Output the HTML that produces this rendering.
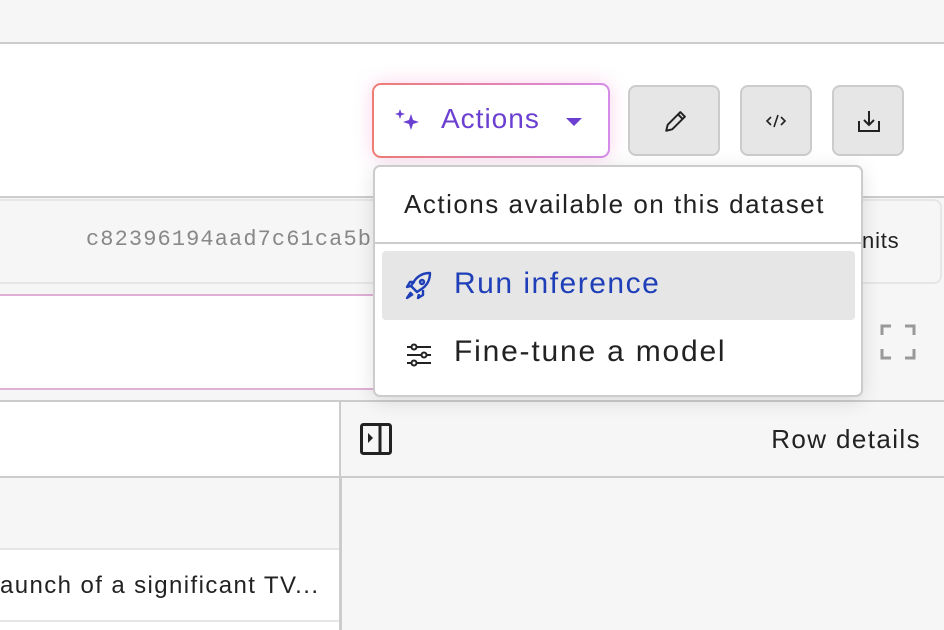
<!DOCTYPE html>
<html><head><style>
*{box-sizing:border-box;margin:0;padding:0}
body{width:944px;height:630px;overflow:hidden;position:relative;background:#fff;font-family:"Liberation Sans",sans-serif;color:#222}
.abs{position:absolute;white-space:nowrap}
</style></head><body>
<div class="abs" style="left:0;top:0;width:944px;height:44px;background:#f6f6f6;border-bottom:2px solid #ccc"></div>
<div class="abs" style="left:372px;top:83px;width:238px;height:75px;border-radius:9px;padding:2px;background:linear-gradient(90deg,#ee7d74,#d58be8);box-shadow:0 0 18px rgba(240,130,200,0.35)">
 <div style="width:100%;height:100%;background:#fff;border-radius:7px;position:relative">
  <svg class="abs" style="left:20px;top:22px" width="28" height="26" viewBox="0 0 28 26"><path d="M6 2l1.3 3.7L11 7 7.3 8.3 6 12 4.7 8.3 1 7l3.7-1.3z" fill="#6b3fd0"/><path d="M17 7l2 6 6 2-6 2-2 6-2-6-6-2 6-2z" fill="#6b3fd0"/></svg>
  <div class="abs" style="left:67px;top:18px;font-size:28px;letter-spacing:1px;color:#6b3fd0">Actions</div>
  <div class="abs" style="left:192px;top:33px;width:0;height:0;border-left:8px solid transparent;border-right:8px solid transparent;border-top:8px solid #6b3fd0"></div>
 </div>
</div>
<div class="abs" style="left:628px;top:85px;width:92px;height:71px;background:#e6e6e6;border:2px solid #ccc;border-radius:8px"><svg class="abs" style="left:33px;top:21px" width="26" height="26" viewBox="0 0 24 24" fill="none" stroke="#222" stroke-width="1.8" stroke-linejoin="round"><path d="M3 21l1.3-5.5L16 3.8l4.2 4.2L8.5 19.7z M14 6l4 4"/></svg></div>
<div class="abs" style="left:740px;top:85px;width:72px;height:71px;background:#e6e6e6;border:2px solid #ccc;border-radius:8px"><svg class="abs" style="left:22px;top:22px" width="24" height="24" viewBox="0 0 24 24" fill="none" stroke="#222" stroke-width="1.6"><path d="M7 8l-4 4 4 4M17 8l4 4-4 4M14 6l-4 12"/></svg></div>
<div class="abs" style="left:832px;top:85px;width:72px;height:71px;background:#e6e6e6;border:2px solid #ccc;border-radius:8px"><svg class="abs" style="left:21px;top:20px" width="28" height="28" viewBox="0 0 28 28" fill="none" stroke="#222" stroke-width="2"><path d="M4 14v10h20V14M14 4v14M9 13l5 5 5-5"/></svg></div>
<div class="abs" style="left:0;top:196px;width:944px;height:205px;background:#f6f6f6;border-top:2px solid #ccc"></div>
<div class="abs" style="left:-10px;top:199px;width:952px;height:85px;background:#f6f6f6;border:2px solid #e6e6e6;border-radius:8px"></div>
<div class="abs" style="left:86px;top:227px;font-family:'Liberation Mono',monospace;font-size:22px;letter-spacing:1.1px;color:#888">c82396194aad7c61ca5b</div>
<div class="abs" style="left:849px;top:228px;font-size:22px;letter-spacing:0.8px;color:#222">units</div>
<div class="abs" style="left:-2px;top:294px;width:400px;height:96px;background:#fff;border-top:2px solid #e0b0d8;border-bottom:2px solid #e0b0d8"></div>
<svg class="abs" style="left:880px;top:324px" width="36" height="36" viewBox="0 0 36 36" fill="none" stroke="#999" stroke-width="3"><path d="M2 11V2h9M25 2h9v9M34 25v9h-9M11 34H2v-9"/></svg>
<div class="abs" style="left:0;top:400px;width:944px;height:78px;background:#fff;border-top:2px solid #ccc;border-bottom:2px solid #ccc"></div>
<div class="abs" style="left:339px;top:400px;width:605px;height:78px;background:#f6f6f6;border:2px solid #ccc;border-right:none"></div>
<svg class="abs" style="left:360px;top:423px" width="32" height="33" viewBox="0 0 32 33" fill="none" stroke="#222" stroke-width="3"><rect x="1.5" y="1.5" width="29" height="29" rx="2"/><path d="M20 2v28"/><path d="M8 10l5 5-5 5z" fill="#222" stroke="none"/></svg>
<div class="abs" style="right:23px;top:424px;font-size:26px;letter-spacing:1.4px;color:#222">Row details</div>
<div class="abs" style="left:0;top:478px;width:340px;height:72px;background:#f6f6f6;border-bottom:2px solid #e6e6e6"></div>
<div class="abs" style="left:0;top:550px;width:340px;height:72px;background:#fff;border-bottom:2px solid #e6e6e6"></div>
<div class="abs" style="left:0;top:572px;font-size:24px;letter-spacing:1.4px;color:#222">aunch of a significant TV...</div>
<div class="abs" style="left:339px;top:478px;width:605px;height:152px;background:#f6f6f6;border-left:3px solid #ccc"></div>
<div class="abs" style="left:373px;top:165px;width:490px;height:232px;background:#fff;border:2px solid #ccc;border-radius:7px;box-shadow:0 4px 20px rgba(0,0,0,0.12)">
 <div class="abs" style="left:29px;top:22px;font-size:26px;letter-spacing:1.5px;color:#222">Actions available on this dataset</div>
 <div class="abs" style="left:0;top:75px;width:486px;height:2px;background:#ccc"></div>
 <div class="abs" style="left:7px;top:84px;width:473px;height:69px;background:#e6e6e6;border-radius:4px"></div>
 <svg class="abs" style="left:29px;top:104px" width="30" height="30" viewBox="0 0 30 30" fill="none" stroke="#1e3fb8" stroke-width="2.4" stroke-linejoin="round"><path d="M11 19l-4-4 4-6c4-5 9-7 15-7 0 6-2 11-7 15l-6 4z"/><circle cx="18" cy="11" r="2"/><path d="M7 15l-4 1 3-5h5M15 23l-1 4 5-3v-5"/><path d="M7 21l-4 6 6-4" fill="#1e3fb8"/></svg>
 <div class="abs" style="left:79px;top:100px;font-size:30px;letter-spacing:1.5px;color:#1e3fb8">Run inference</div>
 <svg class="abs" style="left:30px;top:176px" width="28" height="24" viewBox="0 0 28 24" fill="none" stroke="#222" stroke-width="2"><path d="M2 4h24M2 12h24M2 20h24"/><circle cx="9" cy="4" r="2.5" fill="#fff"/><circle cx="19" cy="12" r="2.5" fill="#fff"/><circle cx="9" cy="20" r="2.5" fill="#fff"/></svg>
 <div class="abs" style="left:79px;top:168px;font-size:30px;letter-spacing:1.8px;color:#222">Fine-tune a model</div>
</div>
</body></html>
